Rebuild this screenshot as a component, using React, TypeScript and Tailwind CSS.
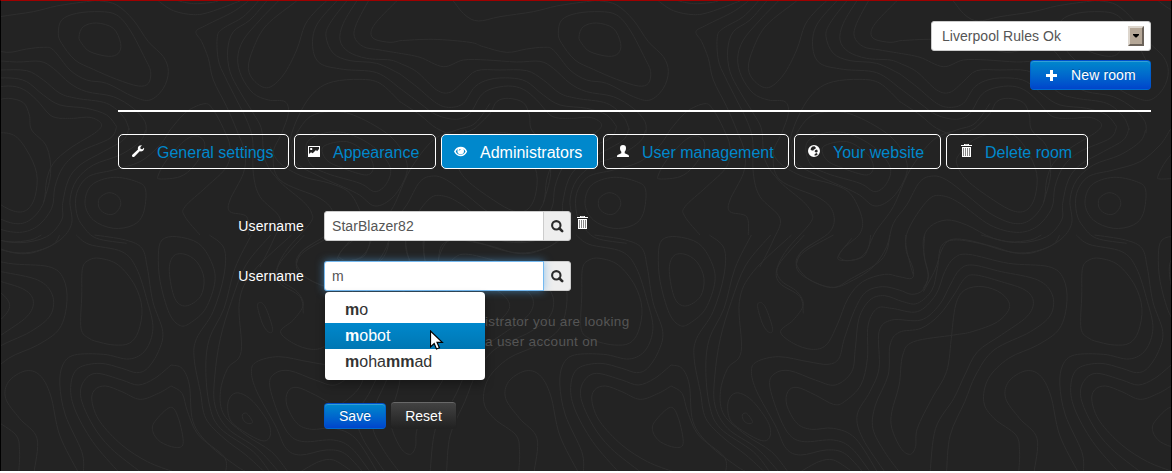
import React from "react";

type Pt = [number, number];

/* Smooth curve through a list of "x,y" points (Catmull-Rom to Bezier). A trailing "z" closes it. */
function curve(src: string): string {
  const closed = src.trim().endsWith("z");
  const pts: Pt[] = src
    .replace("z", "")
    .trim()
    .split(/\s+/)
    .map((p) => p.split(",").map(Number) as Pt);
  const n = pts.length;
  const at = (i: number): Pt => (closed ? pts[(i + n) % n] : pts[Math.max(0, Math.min(n - 1, i))]);
  let d = `M${pts[0][0]},${pts[0][1]}`;
  for (let i = 0; i < (closed ? n : n - 1); i++) {
    const [a, b, c, e] = [at(i - 1), at(i), at(i + 1), at(i + 2)];
    d += `C${b[0] + (c[0] - a[0]) / 6},${b[1] + (c[1] - a[1]) / 6} ${c[0] - (e[0] - b[0]) / 6},${c[1] - (e[1] - b[1]) / 6} ${c[0]},${c[1]}`;
  }
  return closed ? d + "Z" : d;
}

const contours: { transform: string; lines: string[] }[] = [
  {
    transform: "translate(399 -1) scale(.33333)",
    lines: [
      "160,3 195,45 235,63 300,50 400,35 470,18 560,5 600,3 650,15 700,60 745,125 790,170 805,215 790,265 750,300 700,290 620,250 560,240 510,210 460,150 430,142 380,147 320,157 250,140 210,127 100,118 0,122",
      "1490,3 1430,65 1413,98 1425,118 1470,127 1500,122",
      "537,110 550,80 590,69 640,85 662,130 655,160 625,169 570,155 545,130z",
      "475,100 485,60 530,40 600,35 650,45 690,90 735,175 752,215 745,250 715,258 650,238 580,208 525,180 485,130z",
      "0,160 60,172 130,200 190,180 260,180 350,186 420,184 460,205 510,250 560,275 640,290 700,325 735,365 738,400",
      "0,190 50,215 110,270 150,277 190,245 230,212 300,210 380,212 430,240 480,280 530,295 620,310 670,350 688,390",
      "0,222 50,260 110,310 150,322 190,310 225,260 270,238 330,234 380,245 430,285 480,315 560,325 620,345 650,380",
      "0,265 60,310 110,345 170,358 210,340 240,290 270,268 325,258 370,268 410,300 450,345 480,355",
      "225,385 270,340 290,305 325,295 370,308 388,345 395,390 440,440 452,520 430,610",
      "0,305 60,345 110,385 170,405 225,385",
      "775,3 820,32 880,44 930,36 1020,3",
      "835,3 880,11 930,8 955,3",
      "1045,3 1000,35 920,75 888,95 905,125 925,175 940,240 980,320 1010,390 1035,460 1030,520 990,600 990,635 1040,650 1045,705",
      "1075,3 1030,50 970,85 952,110 955,180 975,230 1010,300 1040,360 1058,420 1060,520 1080,590 1140,655 1120,720 1080,800",
      "1100,3 1050,60 1000,95 983,150 990,215 1020,275 1060,340 1085,390 1095,480 1140,545 1210,605 1235,640 1230,670 1160,750 1130,810 1140,850 1200,890 1210,940",
      "1135,3 1080,60 1030,120 1013,175 1025,230 1060,280 1105,300 1155,305 1165,340 1145,400 1120,460 1140,540 1260,595 1300,640 1290,695 1210,750 1190,790",
      "1190,3 1100,75 1060,145 1045,205 1065,245 1105,263 1150,225 1190,150 1215,75 1250,30 1280,3",
      "1310,3 1250,75 1238,140 1260,190 1330,208 1430,218 1500,265",
      "1340,3 1290,70 1278,110 1300,160 1350,182 1430,190 1500,222",
      "1370,3 1330,70 1320,120 1345,155 1400,175 1470,180 1500,190",
      "1405,3 1370,70 1363,110 1390,140 1440,150 1500,160",
      "1160,480 1175,400 1210,320 1250,270 1300,245 1380,238 1440,250 1500,305",
      "810,390 860,335 915,311 940,330 970,385 990,440 980,500 920,560 855,620 855,650 900,705",
      "775,525 800,480 850,425 885,408 910,420 912,450 880,500 840,530 780,537z",
    ],
  },
  {
    transform: "translate(759 79) scale(.33333)",
    lines: [
      "1047,338 1075,350 1082,375 1065,400 1040,402 1018,385 1018,355z",
      "1060,292 1130,305 1157,330 1150,400 1120,435 1060,445 1000,420 975,370 995,315z",
      "1230,150 1200,195 1140,245 1060,270 985,290 950,340 950,400 970,440 1010,475 1100,490",
      "1157,150 1140,185 1080,225 1000,255 950,300 930,360 935,430 900,480 830,515 770,520 700,500 620,480 570,480 545,510 525,570 490,635",
      "1107,145 1090,180 1030,215 960,255 925,300 908,370 905,420 860,470 780,488 700,475 620,435 560,420 510,440 490,480 495,540 505,590 490,625",
      "1070,140 1050,175 960,215 910,260 885,320 875,385 830,440 770,457 690,435 600,370 550,348 510,355 460,420 437,480 450,550 460,585",
      "900,115 940,115 990,112 1023,130 1010,155 930,205 880,250 860,300 850,370 810,420 760,430 690,400 620,345 560,300 520,288 480,305 440,375 400,430 380,500 340,560 280,600 220,622 150,600 110,555 120,520 160,490",
      "590,250 600,220 640,180 700,160 760,165 800,210 830,280 825,350 800,390 760,393 700,360 620,300z",
      "140,190 190,160 260,160 340,200 390,260 380,310 345,335 300,310 200,280 150,250z",
      "110,160 150,110 210,95 280,105 380,160 430,220 440,280 400,350 345,378 290,340 180,290 110,250 95,200z",
      "190,200 260,185 320,220 340,260 320,285 250,265 200,240z",
      "235,530 250,505 300,460 305,410 270,340 210,310 130,290 60,250 30,200",
      "235,530 260,542 310,530 330,490 350,450 400,380 450,270 520,180 590,150 645,130 690,70",
    ],
  },
  {
    transform: "translate(599 234) scale(.3648 .33333)",
    lines: [
      "-15,0 70,15 115,40 130,100 145,200 172,290 160,350 130,400 100,413 60,400 0,385 -60,400 -80,450 -70,520 -20,620 50,710",
      "-65,0 -30,28 60,50 100,100 130,200 145,280 125,345 80,372 10,358 -70,360 -102,390 -110,450 -95,540 -50,650 -45,710",
      "0,70 50,90 95,150 115,220 105,290 80,325 40,330 0,322 -30,310 -52,280 -50,180 -48,100 -30,75z",
      "195,390 225,400 245,450 255,560 300,630 370,690 400,710",
      "195,390 150,430 105,450 60,435 -10,415 -45,440 -52,490 -20,570 30,640 110,710",
      "195,453 160,475 110,493 60,470 15,453 -15,465 -22,500 0,560 60,630 130,680 200,710",
      "195,453 225,475 240,530 270,600 340,665 345,710",
      "193,517 215,550 228,625 205,637 165,620 145,590 150,560z",
      "190,110 200,65 230,57 265,80 285,130 275,185 235,213 205,190z",
      "160,60 170,15 210,5 270,25 305,80 315,140 290,220 250,262 220,272 190,235 165,140z",
      "300,0 340,40 340,120 310,230 265,310 258,370 275,470 290,550 340,610 400,660 450,710",
      "415,0 370,100 340,220 300,310 290,400 300,510 330,580 420,650 465,710",
      "468,0 400,90 360,200 330,310 315,420 315,510 350,580 430,640 490,710",
      "525,0 420,110 382,200 387,350 350,400 330,470 340,540 400,600 470,650 515,710",
      "432,215 440,202 455,220 473,280 465,293 447,270z",
      "350,510 362,480 385,475 420,500 460,560 467,600 450,618 410,600 360,560z",
      "390,540 402,535 418,560 408,566 395,558z",
      "560,0 490,90 495,135 540,170 557,210 530,255 495,290 530,325 580,343 620,330 650,270 680,190 720,140 780,118 820,125 855,130 858,100 840,50 838,0",
      "640,0 560,50 538,90 560,125 635,158 690,130 760,85 785,50 795,0",
      "690,10 652,65 670,77 710,70 735,40 742,0",
      "890,0 888,60 900,120 885,165 855,178 820,165 775,155 730,170 700,220 670,310 655,370 625,388 570,380 490,365 430,380 415,410 430,470 480,570 510,640 550,660 620,645 670,655 720,710",
      "1260,0 1240,30 1180,52 1120,50 1040,25 970,15 935,35 925,100 910,165 870,205 830,200 780,182 740,195 710,250 700,340 690,410 645,450 590,435 520,407 480,415 465,450 490,540 520,600 560,620 640,615 690,640 740,710",
      "1045,0 1120,20 1180,15 1210,0",
      "1148,710 1150,650 1140,600 1080,550 1052,500 1065,430 1120,370 1200,330 1260,280 1280,200 1270,130 1230,95 1120,85 1010,58 970,70 945,110 920,180 870,230 800,220 760,220 735,270 733,370 715,450 670,500 640,508 590,480 540,457 515,470 512,510 540,565 580,583 640,580 700,610 760,710",
      "1190,710 1198,610 1150,550 1112,490 1120,440 1165,408 1205,420 1235,480 1260,600 1310,710",
      "950,710 960,600 1000,500 1030,420 1080,345 1180,290 1235,240 1240,180 1200,135 1100,110 1020,90 985,105 960,150 930,210 880,255 800,255 765,290 765,400 740,470 705,540 720,610 780,710",
      "905,710 920,580 970,490 1000,420 1035,350 1100,300 1170,245 1188,200 1165,165 1100,140 1030,120 1000,130 970,180 930,240 880,280 820,292 795,330 790,420 755,510 748,580 780,650 820,710",
      "963,310 975,210 1000,165 1050,155 1100,175 1123,215 1090,260 1020,290 970,300 860,320 830,360 820,450 800,530 800,580 825,640 850,658 865,635 870,580 910,490 950,410 963,310",
      "550,710 600,680 640,675 685,705",
    ],
  },
];

function Topography() {
  return (
    <svg className="absolute inset-0 size-full" aria-hidden="true">
      <defs>
        <g id="contours" fill="none" stroke="#2e2e2e">
          {contours.map((g, i) => (
            <g key={i} transform={g.transform}>
              {g.lines.map((l, j) => (
                <path key={j} d={curve(l)} vectorEffect="non-scaling-stroke" />
              ))}
            </g>
          ))}
        </g>
      </defs>
      {[-1000, -500, 0, 500].map((x) => (
        <use key={x} href="#contours" x={x} />
      ))}
    </svg>
  );
}

function Icon({ children, className = "" }: { children: React.ReactNode; className?: string }) {
  return (
    <svg viewBox="0 0 14 14" className={`size-3.5 shrink-0 ${className}`} fill="currentColor" aria-hidden="true">
      {children}
    </svg>
  );
}

const Wrench = () => (
  <Icon>
    <path d="M11.900 2.700 10.400 4.300 8.700 4 8.300 2.300 9.900.3C8 .1 6.400 1 6 2.600c-.2.700-.2 1.300 0 1.800L.600 9.500c-.8.8-.8 1.600-.2 2.200.6.600 1.400.5 2.200-.2L7.700 6.300c2.200.6 4.200-.7 4.400-2.500.1-.4 0-.8-.2-1.100Z" />
  </Icon>
);
const Picture = () => (
  <Icon>
    <path fillRule="evenodd" d="M0 1h12v11H0V1Zm1 1v7l2-1.700 1.700 1L8 5l1 1.200L11 4V2H1Zm1.200 1h2v2h-2V3Z" />
  </Icon>
);
const Eye = () => (
  <Icon className="-ml-px mr-px">
    <path fillRule="evenodd" d="M0 6.500C1.600 3.200 4 1.800 6.800 1.800s5 1.400 6.400 4.700c-1.400 3.200-3.600 4.700-6.400 4.700S1.400 9.700 0 6.500Zm1.700 0c1.200 2.200 2.800 3.200 4.900 3.200s3.700-1 4.900-3.200c-.6-1.100-1.300-1.900-2.100-2.400.4.600.6 1.200.6 1.900a3.300 3.300 0 0 1-6.600 0c0-.7.2-1.400.6-1.900-1 .5-1.700 1.300-2.300 2.400Zm4.700-2.400c-1 0-1.700.8-1.600 2 .4-.9.900-1.300 1.800-1.400Z" />
  </Icon>
);
const User = () => (
  <Icon>
    <path d="M6 0c2 0 3 1.200 3 3 0 1.700-.5 2.900-1.300 3.700v1.600l3.300 1.500c.7.400 1 .9 1 2.200H0c0-1.300.3-1.800 1-2.200l3.300-1.500V6.700C3.500 5.900 3 4.700 3 3c0-1.800 1-3 3-3Z" />
  </Icon>
);
const Globe = () => (
  <Icon>
    <path
      fillRule="evenodd"
      d="M6 0a6 6 0 1 1 0 12A6 6 0 0 1 6 0ZM6.500 1.200 4.500 1.500 3 2.900 2.600 4.700l1.300.9 1.500-.2.500-1 1.400-.4.600-1.300-1.400-1.500ZM9 4.600 7.400 5l-.9 1.300.9 1 1.500.1.900-1.200L9 4.600ZM8.700 7.900l-2 1-.2 1.500 1.700.1 1.600-1.300-1.100-1.300Z"
    />
  </Icon>
);
const Trash = ({ className = "" }: { className?: string }) => (
  <Icon className={className}>
    <path fillRule="evenodd" d="M3 0h5v1h3v1H0V1h3V0Zm1 .8V1h3V.8H4ZM1 3h9v10H1V3Zm1 1v8h1V4H2Zm2 0v8h1V4H4Zm2 0v8h1V4H6Zm2 0v8h1V4H8Z" />
    <path opacity=".45" d="M2 4h1v8H2V4Zm2 0h1v8H4V4Zm2 0h1v8H6V4Zm2 0h1v8H8V4Z" />
  </Icon>
);
const Search = () => (
  <Icon className="text-[#2b2b2b]">
    <circle cx="5.300" cy="5.300" r="4.200" fill="none" stroke="currentColor" strokeWidth="2.100" />
    <path d="m8.500 8.500 2.700 2.700" stroke="currentColor" strokeWidth="2.600" strokeLinecap="round" />
  </Icon>
);
const Plus = () => (
  <Icon>
    <path d="M4 0h3v4h4v3H7v4H4V7H0V4h4V0Z" />
  </Icon>
);

const tabs = [
  { label: "General settings", icon: <Wrench />, width: "w-[171px]" },
  { label: "Appearance", icon: <Picture />, width: "w-[142px]" },
  { label: "Administrators", icon: <Eye />, width: "w-[157px]", active: true },
  { label: "User management", icon: <User />, width: "w-[186px]" },
  { label: "Your website", icon: <Globe />, width: "w-[147px]" },
  { label: "Delete room", icon: <Trash className="-mr-px -mt-px ml-px" />, width: "w-[142px]" },
];

const primary =
  "rounded border border-[#0055cc]/60 bg-linear-to-b from-[#0088cc] to-[#0044cc] text-white shadow-[inset_0_1px_0_rgba(255,255,255,.2)] [text-shadow:0_-1px_0_rgba(0,0,0,.25)]";

function UserField({ value, focused = false }: { value: string; focused?: boolean }) {
  return (
    <div className="flex h-[30px] items-start">
      <label className="w-[206px] shrink-0 pr-5 text-right text-sm leading-[30px] tracking-[.15px] text-white">Username</label>
      <div
        className={`z-10 flex h-[30px] w-[220px] items-center rounded-l-[3px] border bg-white px-[7px] text-sm tracking-[.07px] text-[#555] ${
          focused
            ? "border-[#52a8ec]/80 shadow-[0_0_8px_rgba(82,168,236,.6)]"
            : "border-[#ccc]"
        }`}
      >
        {value}
      </div>
      <button className="-ml-px flex h-[30px] w-7 items-center rounded-r-[3px] border border-[#ccc] bg-[#eee] pl-[7px] pt-px">
        <Search />
      </button>
      {!focused && (
        <button className="ml-1.5 mt-[5px] text-white">
          <Trash />
        </button>
      )}
    </div>
  );
}

export default function App() {
  return (
    <div className="h-[473px] w-[1172px] overflow-hidden border-b-2 border-white bg-white font-['Liberation_Sans',Arial,sans-serif]">
      <div className="relative h-[471px] border-x border-t border-x-black border-t-[#a00000] bg-[#232323]">
        <Topography />
        <div className="relative ml-[117px] w-[1033px]">
          <header className="flex h-[111px] flex-col items-end gap-[9px] border-b-2 border-white pt-5">
            <div className="flex h-[30px] w-[220px] items-center justify-between rounded-[3px] border border-[#ccc] bg-white pl-[10px] pr-1.5 text-sm tracking-[.04px] text-[#555]">
              Liverpool Rules Ok
              <span className="flex h-5 w-4 items-center justify-center border-2 border-b-[#6b6259] border-l-[#ddd6cd] border-r-[#6b6259] border-t-[#ddd6cd] bg-[#b5a797]">
                <svg className="h-1 w-1.5 shrink-0" viewBox="0 0 6 4" aria-hidden="true">
                  <path d="M0 0h6v1L3.500 3.500h-1L0 1Z" />
                </svg>
              </span>
            </div>
            <button className={`flex h-[30px] w-[121px] items-center pl-[15px] text-sm ${primary}`}>
              <span className="mt-[3px]"><Plus /></span>
              <span className="ml-[11px] tracking-[.12px]">New room</span>
            </button>
          </header>

          <nav className="mt-[22px] flex gap-[5px]">
            {tabs.map((t) => (
              <a
                key={t.label}
                className={`flex h-[35px] shrink-0 items-start whitespace-nowrap rounded-[5px] border border-white pl-[13px] ${t.width} ${
                  t.active ? "bg-[#0088cc] text-white" : "text-[#0088cc]"
                }`}
              >
                <span className="mt-[10px] text-white">{t.icon}</span>
                <span className="ml-[11px] text-base leading-9">{t.label}</span>
              </a>
            ))}
          </nav>

          <form className="mt-[42px]">
            <UserField value="StarBlazer82" />
            <div className="relative mt-5">
              <UserField value="m" focused />
              <ul className="absolute left-[207px] top-[31px] z-20 h-[88px] w-40 rounded bg-white pt-[5px] text-base leading-[26px] text-[#333] shadow-[0_5px_10px_rgba(0,0,0,.3)]">
                <li className="h-[26px] pl-5"><b>m</b>o</li>
                <li className="h-[26px] bg-linear-to-b from-[#0088cc] to-[#0077b3] pl-5 text-white"><b>m</b>obot</li>
                <li className="h-[26px] pl-5"><b>m</b>oha<b>mm</b>ad</li>
                <svg className="absolute left-[105px] top-[38px] h-5 w-3.5" viewBox="0 0 14 20" aria-hidden="true">
                  <path d="M.5 1v16l3.700-3.500 2.300 5.500 2.900-1.200L7 12.300h5.300L.5 1Z" fill="#fff" stroke="#000" strokeWidth="1.200" />
                </svg>
              </ul>
            </div>
            <p className="ml-[367px] mt-[21px] whitespace-nowrap text-[13.5px] leading-5 tracking-[.33px] text-[#555]">
              istrator you are looking
              <br />a user account on
            </p>
            <div className="ml-[206px] mt-[49px] flex gap-1">
              <button className={`mt-0.5 h-[26px] w-[62px] text-sm leading-6 ${primary}`}>Save</button>
              <button className="h-7 w-[67px] rounded border border-[#222] bg-linear-to-b from-[#444] to-[#222] text-sm leading-7 text-white shadow-[inset_0_1px_0_rgba(255,255,255,.2)]">
                Reset
              </button>
            </div>
          </form>
        </div>
      </div>
    </div>
  );
}
